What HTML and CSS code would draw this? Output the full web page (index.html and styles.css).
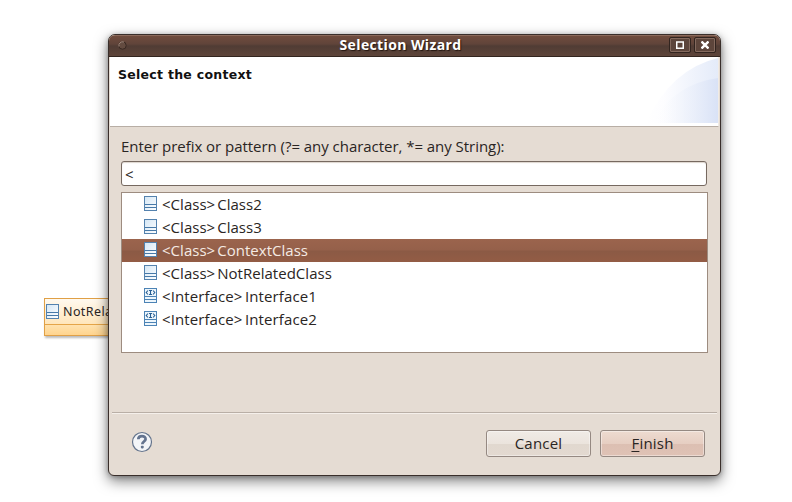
FILE: index.html
```html
<!DOCTYPE html>
<html lang="en">
<head>
<meta charset="utf-8">
<title>Selection Wizard</title>
<link rel="stylesheet" href="styles.css">
</head>
<body>
<svg width="0" height="0" class="defs">
  <defs>
    <linearGradient id="fill" x1="0" y1="0" x2="1" y2="1"><stop offset="0" stop-color="#d3e6f5"/><stop offset="1" stop-color="#fff"/></linearGradient>
    <symbol id="class" viewBox="0 0 13 15">
      <rect x=".5" y=".5" width="12" height="14" fill="url(#fill)" stroke="#5482ae"/>
      <path d="M1 8.5h11M1 11.5h11" stroke="#4779a8"/>
    </symbol>
    <symbol id="interface" viewBox="0 0 13 15">
      <rect x=".5" y=".5" width="12" height="14" fill="#edf6fc" stroke="#4c83b5"/>
      <path d="M1 8.5h11M1 11.5h11" stroke="#4c83b5"/>
      <path d="M4 2.500L2.200 4.500 4 6.500M9 2.500l1.800 2L9 6.500M5 2.500h3M5 6.500h3M6.500 2.500v4" fill="none" stroke="#285f94" stroke-width="1.100"/>
    </symbol>
  </defs>
</svg>
<div class="node">
  <div class="node-head"><svg class="icon"><use href="#class"/></svg><span>NotRelatedClass</span></div>
  <div class="node-body"></div>
</div>
<main class="window">
  <header class="titlebar">
    <svg class="dot" width="9" height="9"><circle cx="4.500" cy="4.500" r="3.700" fill="#634b40" stroke="#3a2a23"/><path d="M1 5.500A3.700 3.700 0 0 1 6 1.100" fill="none" stroke="#a38b7e"/></svg>
    <h1>Selection Wizard</h1>
    <div class="controls">
      <span class="control"><svg width="8" height="8"><path d="M0 1h8M.75 .75v6.500h6.500v-6.500" fill="none" stroke="#fff" stroke-width="1.500"/></svg></span>
      <span class="control"><svg width="8" height="8"><path d="M.5 .5l7 7M7.500 .5l-7 7" stroke="#fff" stroke-width="2.400"/></svg></span>
    </div>
  </header>
  <section class="banner">
    <h2>Select the context</h2>
    <svg class="art" width="72" height="66" viewBox="0 0 72 66">
      <defs>
        <linearGradient id="a"><stop offset="0" stop-color="#fff"/><stop offset=".25" stop-color="#fdfdff"/><stop offset="1" stop-color="#e4ebf9"/></linearGradient>
        <linearGradient id="b"><stop offset="0" stop-color="#fff" stop-opacity="0"/><stop offset="1" stop-color="#d9e2f6"/></linearGradient>
      </defs>
      <path d="M0 66Q25 12 72 1V66z" fill="url(#a)"/>
      <path d="M6 66Q28 27 72 21V66z" fill="url(#b)"/>
    </svg>
  </section>
  <section class="content">
    <label for="pattern">Enter prefix or pattern (?= any character, *= any String):</label>
    <input id="pattern" type="text" value="&lt;">
    <ul class="list">
      <li><svg class="icon"><use href="#class"/></svg><span>&lt;Class&gt; Class2</span></li>
      <li><svg class="icon"><use href="#class"/></svg><span>&lt;Class&gt; Class3</span></li>
      <li class="selected"><svg class="icon"><use href="#class"/></svg><span>&lt;Class&gt; ContextClass</span></li>
      <li><svg class="icon"><use href="#class"/></svg><span>&lt;Class&gt; NotRelatedClass</span></li>
      <li><svg class="icon"><use href="#interface"/></svg><span class="wide">&lt;Interface&gt; Interface1</span></li>
      <li><svg class="icon"><use href="#interface"/></svg><span class="wide">&lt;Interface&gt; Interface2</span></li>
    </ul>
  </section>
  <footer class="footer">
    <svg class="help" width="22" height="22" viewBox="0 0 22 22">
      <circle cx="11" cy="11" r="9.500" fill="#f3f5f8" stroke="#64748c" stroke-width="1.200"/>
      <path d="M7.300 8.200C7.400 3.900 14.700 4.100 14.600 8.100C14.500 10.500 11.300 10.600 11.300 13.200" fill="none" stroke="#64748f" stroke-width="2.700"/>
      <rect x="9.900" y="14.700" width="2.800" height="2.700" rx=".8" fill="#64748f"/>
    </svg>
    <button class="cancel">Cancel</button>
    <button class="finish"><u>F</u>inish</button>
  </footer>
</main>
</body>
</html>
```

FILE: styles.css
```css
* { box-sizing: border-box; }
body { margin: 0; width: 792px; height: 502px; overflow: hidden; background: #fff; font: 400 15px "Open Sans", "Noto Sans", sans-serif; color: #2a2523; position: relative; }
.defs { position: absolute; }
.icon { width: 13px; height: 15px; flex: none; display: block; }

.node { position: absolute; left: 44px; top: 298px; width: 130px; height: 38px; border: 1px solid #e0a046; box-shadow: 1px 2px 2px #bbb; background: #fff; }
.node-head { height: 26px; padding-left: 1px; display: flex; align-items: center; gap: 4px; border-bottom: 1px solid #e5a548; background: linear-gradient(#fff9ef, #ffe6bb); font: 12.5px "Noto Sans", sans-serif; letter-spacing: .4px; }
.node-head .icon { margin-top: -1px; }
.node-body { height: 10px; background: linear-gradient(#ffe2ae, #ffd48e); }

.window { position: absolute; left: 108px; top: 34px; width: 613px; height: 442px; border: 1px solid #3a2f2b; border-radius: 7px 7px 6px 6px; background: #e5dcd3; overflow: hidden; box-shadow: 0 5px 14px rgba(0,0,0,.5), 0 1px 5px rgba(0,0,0,.25); display: flex; flex-direction: column; }
.titlebar { height: 22px; flex: none; display: grid; grid-template-columns: 32px 1fr 60px; align-items: center; background: linear-gradient(#704c3d, #60443a 40%, #503c34 50%, #5d4439); border-top: 1px solid #8b6a5b; border-bottom: 1px solid #32251f; }
.dot { margin: -1px 0 0 9px; }
h1 { margin: -2px 0 0; text-align: center; font: bold 14px/20px "Open Sans", sans-serif; letter-spacing: .38px; color: #fff; text-shadow: 1px 1px 1px #241610; }
.controls { display: flex; gap: 3px; justify-content: flex-end; padding: 0 4px 2px 0; }
.control { width: 22px; height: 16px; border: 1px solid #32241f; border-radius: 2px; box-shadow: inset 0 0 0 1px #83695d; background: #5d453b; display: grid; place-items: center; }
.control svg { display: block; }

.banner { height: 70px; flex: none; margin: 0 1px; background: #fff; border-bottom: 1px solid #b8aea5; border-right: 1px solid #f0ebe6; display: flex; justify-content: space-between; }
h2 { margin: 10px 0 0 8px; font: bold 12.5px/16px "DejaVu Sans", sans-serif; letter-spacing: .28px; color: #111; white-space: nowrap; }

.content { height: 285px; flex: none; padding: 8px 12px 0; display: flex; flex-direction: column; }
label { height: 22px; line-height: 22px; white-space: nowrap; letter-spacing: -.04px; }
input { width: 586px; height: 25px; margin: 4px 0 0; padding: 0 3px; border: 1px solid #766960; border-radius: 3px; background: #fff; box-shadow: inset 0 1px 1px #ddd5ce; font: 400 15px "Open Sans", sans-serif; color: #2a2523; outline: 0; }
.list { width: 587px; height: 161px; margin: 6px 0 0; padding: 0; list-style: none; border: 1px solid #9d8c80; background: #fff; }
li { height: 23px; padding-left: 22px; display: flex; align-items: center; gap: 5px; line-height: 23px; white-space: nowrap; letter-spacing: .03px; word-spacing: -2px; }
li .icon { margin-top: -2px; }
.wide { letter-spacing: .1px; word-spacing: -1.5px; }
.selected { background: linear-gradient(#9b644d, #95604a 48%, #8b5a45 52%, #935c45); color: #f5eae3; }

.footer { flex: 1; margin: 0 3px; border-top: 1px solid #b9afa6; box-shadow: inset 0 1px #f5f0eb; display: flex; align-items: flex-start; padding: 17px 12px 0 19px; }
.help { margin: 1px auto 0 0; }
button { width: 105px; height: 27px; padding: 0 0 1px; font: 400 15px/24px "Open Sans", sans-serif; letter-spacing: .2px; color: #2a2523; border: 1px solid #958982; border-radius: 3px; background: linear-gradient(#f0ebe6, #ebe4dd 50%, #e1d8cf 52%, #e3d9d0); box-shadow: inset 0 0 0 1px rgba(255,255,255,.4); }
.finish { margin-left: 9px; background: linear-gradient(#eddbd0, #e6cec2 50%, #dcbfb2 52%, #dfc2b5); }
u { text-underline-offset: 2px; }
```
